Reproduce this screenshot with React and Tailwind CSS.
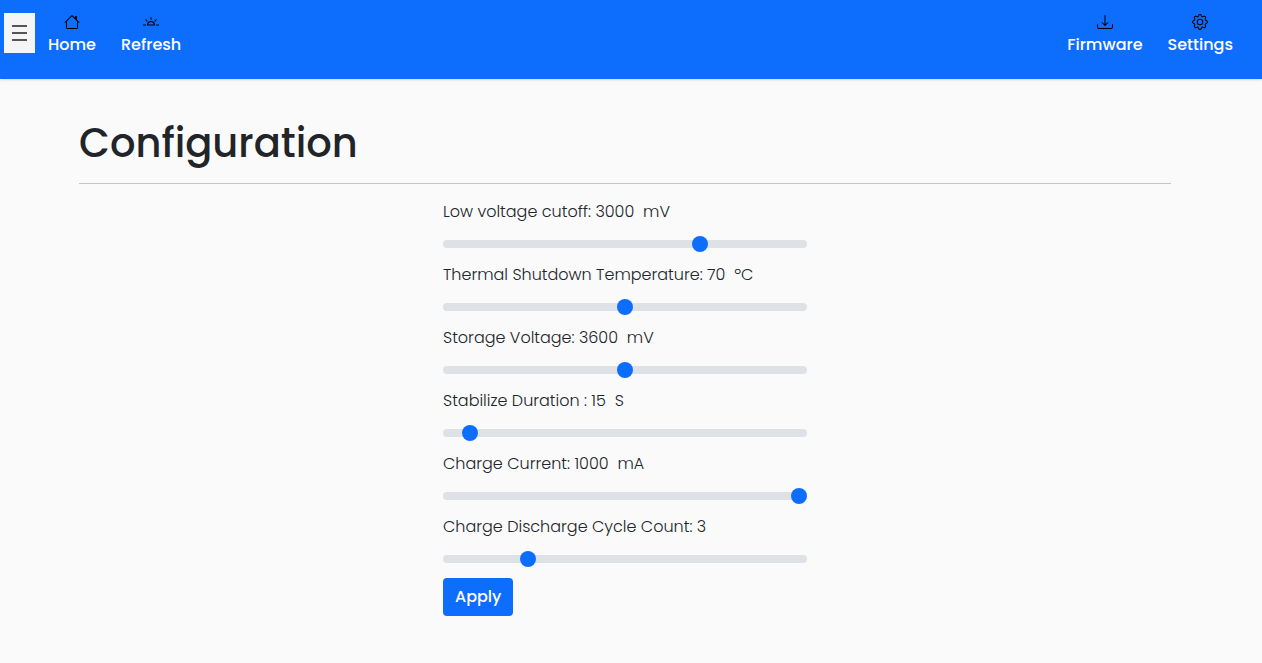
import { useState } from "react";
import { BsHouse, BsBrightnessAltHigh, BsDownload, BsGear } from "react-icons/bs";

const settings = [
  { id: "cutoff", label: "Low voltage cutoff: ", unit: "mV", min: 2500, max: 3200, step: 10, value: 3000 },
  { id: "thermal", label: "Thermal Shutdown Temperature: ", unit: "ºC", min: 40, max: 100, step: 1, value: 70 },
  { id: "storage", label: "Storage Voltage: ", unit: "mV", min: 3200, max: 4000, step: 10, value: 3600 },
  { id: "stabilize", label: "Stabilize Duration : ", unit: "S", min: 0, max: 275, step: 1, value: 15 },
  { id: "current", label: "Charge Current: ", unit: "mA", min: 100, max: 1000, step: 10, value: 1000 },
  { id: "cycles", label: "Charge Discharge Cycle Count: ", unit: "", min: 1, max: 10, step: 1, value: 3 },
];

function NavLink({ icon: Icon, children }) {
  return (
    <a href="#" className="flex flex-col items-center text-base leading-6 font-medium text-white">
      <Icon className="mt-1 mb-[3px] size-4 text-black" aria-hidden="true" />
      <span>{children}</span>
    </a>
  );
}

function RangeSetting({ id, label, unit, min, max, step, value: initial }) {
  const [value, setValue] = useState(initial);
  return (
    <div className="mb-[7px] flex flex-col gap-2">
      <label htmlFor={id} className="text-base leading-6 font-light whitespace-pre">
        {label}
        {value}
        {unit && "  " + unit}
      </label>
      <input
        id={id}
        type="range"
        min={min}
        max={max}
        step={step}
        value={value}
        onChange={(e) => setValue(Number(e.target.value))}
        className="h-6 w-full cursor-pointer appearance-none bg-transparent [&::-webkit-slider-runnable-track]:h-2 [&::-webkit-slider-runnable-track]:rounded-full [&::-webkit-slider-runnable-track]:bg-[#dee2e6] [&::-webkit-slider-thumb]:-mt-1 [&::-webkit-slider-thumb]:size-4 [&::-webkit-slider-thumb]:appearance-none [&::-webkit-slider-thumb]:rounded-full [&::-webkit-slider-thumb]:bg-[#0d6efd]"
      />
    </div>
  );
}

export default function App() {
  return (
    <div className="min-h-screen bg-[#fafafa] font-['Poppins','Inter',sans-serif] text-[#212529]">
      <header className="flex items-start bg-[#0d6efd] pt-[10px] pr-[29px] pb-[22px] pl-1 shadow-sm">
        <button type="button" aria-label="Menu" className="mt-[3px] flex h-10 w-[31px] flex-col items-center justify-center gap-[5px] bg-[#f5f5f5]">
          <span className="h-0.5 w-[15px] bg-[#555]" />
          <span className="h-0.5 w-[15px] bg-[#555]" />
          <span className="h-0.5 w-[15px] bg-[#555]" />
        </button>
        <nav className="flex grow justify-between pl-[13px]">
          <div className="flex gap-[25px]">
            <NavLink icon={BsHouse}>Home</NavLink>
            <NavLink icon={BsBrightnessAltHigh}>Refresh</NavLink>
          </div>
          <div className="flex gap-[25px]">
            <NavLink icon={BsDownload}>Firmware</NavLink>
            <NavLink icon={BsGear}>Settings</NavLink>
          </div>
        </nav>
      </header>
      <main className="pr-3">
        <div className="mx-auto max-w-[1140px] px-6 pt-10">
          <h1 className="text-[40px] leading-12 font-medium">Configuration</h1>
          <hr className="my-4 border-[#c4c5c6]" />
          <form className="mx-auto w-1/3" onSubmit={(e) => e.preventDefault()}>
            {settings.map((s) => (
              <RangeSetting key={s.id} {...s} />
            ))}
            <button type="submit" className="h-[38px] rounded bg-[#0d6efd] px-3 text-base font-medium text-white">
              Apply
            </button>
          </form>
        </div>
      </main>
    </div>
  );
}
